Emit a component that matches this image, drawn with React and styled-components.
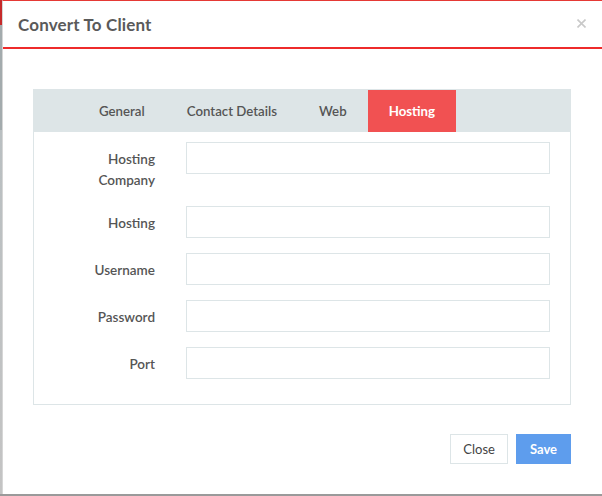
import React from 'react';
import styled, { createGlobalStyle } from 'styled-components';

const GlobalStyle = createGlobalStyle`
  html, body {
    margin: 0;
    padding: 0;
    background: #fff;
  }
  body {
    font-family: Lato, "Liberation Sans", sans-serif;
  }
`;

const Page = styled.div`
  display: flex;
  width: 602px;
  height: 496px;
  box-sizing: border-box;
  border-bottom: 2px solid #9a9a9a;
  overflow: hidden;
`;

const Backdrop = styled.div`
  width: 2px;
  flex: none;
  background: linear-gradient(
    to bottom,
    #c62a2a 0,
    #c62a2a 25px,
    #a3abad 25px,
    #a3abad 130px,
    #b9bfc1 130px,
    #c4c4c4 100%
  );
`;

const Modal = styled.div`
  flex: 1;
  display: flex;
  flex-direction: column;
  background: #fff;
  border-top: 1px solid #e53935;
  border-left: 1px solid #d6d6d6;
`;

const Header = styled.div`
  display: flex;
  align-items: center;
  justify-content: space-between;
  height: 46px;
  padding: 0 16px 0 15px;
  border-bottom: 2px solid #ee2b2b;
`;

const Title = styled.h4`
  margin: 0;
  font-size: 17px;
  font-weight: 700;
  color: #5a5a5a;
  letter-spacing: 0.15px;
`;

const CloseX = styled.button`
  border: none;
  background: none;
  padding: 0;
  display: flex;
  color: #c9c9c9;
  cursor: pointer;
  margin-top: -2px;
`;

const Body = styled.div`
  padding: 40px 31px 0 30px;
`;

const TabPanel = styled.div`
  border: 1px solid #dde5e7;
`;

const TabBar = styled.div`
  display: flex;
  height: 42px;
  padding-left: 44px;
  background: #dde5e7;
`;

const Tab = styled.div`
  display: flex;
  align-items: center;
  padding: 0 21px;
  font-size: 13.25px;
  font-weight: ${p => (p.$active ? 700 : 600)};
  color: ${p => (p.$active ? '#fff' : '#555')};
  background: ${p => (p.$active ? '#f15152' : 'transparent')};
`;

const Form = styled.div`
  display: grid;
  grid-template-columns: 121px 1fr;
  column-gap: 31px;
  row-gap: 15px;
  padding: 10px 20px 25px 0;
`;

const Label = styled.label`
  text-align: right;
  font-size: 13.5px;
  font-weight: 600;
  color: #555;
  line-height: 21px;
  padding-top: 7px;
`;

const Input = styled.input`
  height: 32px;
  box-sizing: border-box;
  border: 1px solid #dde5e7;
  outline: none;
  padding: 0 10px;
  font-size: 13px;
`;

const Footer = styled.div`
  display: flex;
  justify-content: flex-end;
  gap: 8px;
  padding: 29px 31px 0 30px;
`;

const Button = styled.button`
  height: 30px;
  box-sizing: border-box;
  padding: 0 ${p => (p.$primary ? 13 : 12)}px;
  font-family: Lato, "Liberation Sans", sans-serif;
  font-size: 13px;
  font-weight: ${p => (p.$primary ? 700 : 400)};
  color: ${p => (p.$primary ? '#fff' : '#444')};
  background: ${p => (p.$primary ? '#5e9ded' : '#fff')};
  border: 1px solid ${p => (p.$primary ? '#5e9ded' : '#dde5e7')};
  cursor: pointer;
`;

const tabs = ['General', 'Contact Details', 'Web', 'Hosting'];
const fields = [
  { label: <>Hosting<br />Company</> },
  { label: 'Hosting' },
  { label: 'Username' },
  { label: 'Password', type: 'password' },
  { label: 'Port' },
];

export default function App() {
  return (
    <>
      <GlobalStyle />
      <Page>
        <Backdrop />
        <Modal>
          <Header>
            <Title>Convert To Client</Title>
            <CloseX aria-label="close">
              <svg width="9" height="9" viewBox="0 0 9 9">
                <path d="M0.5 0.5L8.5 8.5M8.5 0.5L0.5 8.5" stroke="currentColor" strokeWidth="1.6" />
              </svg>
            </CloseX>
          </Header>
          <Body>
            <TabPanel>
              <TabBar>
                {tabs.map(t => (
                  <Tab key={t} $active={t === 'Hosting'}>{t}</Tab>
                ))}
              </TabBar>
              <Form>
                {fields.map((f, i) => (
                  <React.Fragment key={i}>
                    <Label>{f.label}</Label>
                    <Input type={f.type || 'text'} />
                  </React.Fragment>
                ))}
              </Form>
            </TabPanel>
          </Body>
          <Footer>
            <Button>Close</Button>
            <Button $primary>Save</Button>
          </Footer>
        </Modal>
      </Page>
    </>
  );
}
